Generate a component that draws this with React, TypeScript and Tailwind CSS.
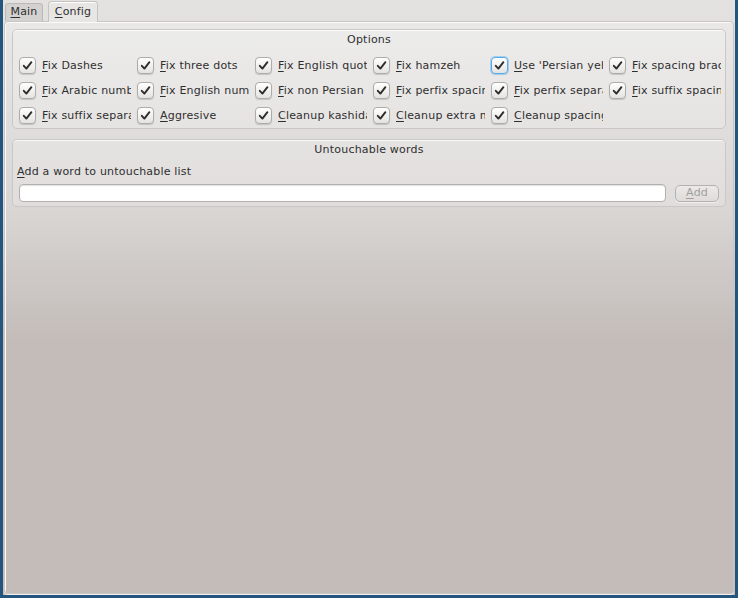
import { ReactNode } from "react"

const options = [
  ["Fix Dashes", "F"],
  ["Fix three dots", "F"],
  ["Fix English quotes", "F"],
  ["Fix hamzeh", "F"],
  ["Use 'Persian yeh' to show ezafe", "U"],
  ["Fix spacing braces and quotes", "F"],
  ["Fix Arabic numbers", "F"],
  ["Fix English numbers", "F"],
  ["Fix non Persian chars", "F"],
  ["Fix perfix spacing", "F"],
  ["Fix perfix separate", "F"],
  ["Fix suffix spacing", "F"],
  ["Fix suffix separate", "F"],
  ["Aggresive", "A"],
  ["Cleanup kashidas", "C"],
  ["Cleanup extra marks", "C"],
  ["Cleanup spacing", "C"],
]

function Mnemonic({ text }: { text: string }) {
  return (
    <>
      <span className="underline underline-offset-2">{text[0]}</span>
      {text.slice(1)}
    </>
  )
}

function CheckBox({ label, focused }: { label: string; focused?: boolean }) {
  return (
    <div className="flex h-[25px] items-center">
      <div
        className={`flex h-[17px] w-[17px] shrink-0 items-center justify-center rounded-[4px] border bg-[linear-gradient(to_bottom,#ffffff,#e4e3e2)] shadow-[0_1px_1px_rgba(0,0,0,0.15)] ${
          focused ? "border-[#5ba8e2] ring-1 ring-[#9fd0f2]" : "border-[#aeaba8]"
        }`}
      >
        <svg width="13" height="13" viewBox="0 0 13 13">
          <path d="M2.8 6.8 L5.4 9.6 L10.4 3.2" fill="none" stroke="#2d2d2d" strokeWidth="1.9" strokeLinecap="round" strokeLinejoin="round" />
        </svg>
      </div>
      <span className="ml-[6px] w-[89px] overflow-hidden whitespace-nowrap text-[11px] leading-[14px] tracking-[0.2px] text-[#2f2f2f]">
        <Mnemonic text={label} />
      </span>
    </div>
  )
}

function GroupBox({ title, children, className = "" }: { title: string; children: ReactNode; className?: string }) {
  return (
    <div
      className={`rounded-[5px] border border-[#cbc7c4] bg-white/20 shadow-[inset_0_1px_0_rgba(255,255,255,0.8)] ${className}`}
    >
      <div className="h-[15px] text-center text-[11px] leading-[15px] tracking-[0.2px] text-[#2f2f2f]">{title}</div>
      {children}
    </div>
  )
}

export default function App() {
  return (
    <div
      className="h-[598px] w-[738px] bg-[#24557e] px-[3px] pb-[3px]"
      style={{ fontFamily: "'DejaVu Sans', 'Noto Sans', sans-serif" }}
    >
      <div className="flex h-full flex-col bg-[linear-gradient(to_bottom,#e4e2e0_0px,#d9d6d4_200px,#c4bdba_330px)]">
        {/* Tabs */}
        <div className="flex h-[21px] items-end gap-[5px] pl-[2px]">
          <div className="flex h-[18px] w-[38px] items-center justify-center rounded-t-[4px] border border-b-0 border-[#bcb8b5] bg-[#d4d2d0] text-[11px] tracking-[0.2px] text-[#2f2f2f]">
            <Mnemonic text="Main" />
          </div>
          <div className="relative -mb-px flex h-[21px] w-[50px] items-center justify-center rounded-t-[4px] border border-b-0 border-[#c6c2bf] bg-[#e7e6e5] text-[11px] tracking-[0.2px] text-[#2f2f2f] shadow-[inset_0_1px_0_#fff]">
            <Mnemonic text="Config" />
          </div>
        </div>

        {/* Tab pane */}
        <div className="mx-px mb-px flex-1 rounded-[4px] border border-[#c9c5c2] bg-[linear-gradient(to_bottom,#e9e8e7_0px,#d8d5d3_190px,#c3bcb9_320px)] px-[7px] pt-[7px] shadow-[inset_1px_1px_0_#fafafa,0_1px_0_#f4f2f1]">
          <GroupBox title="Options" className="pt-[2px]">
            <div className="mt-[6px] grid grid-cols-[repeat(6,118px)] pl-[6px]">
              {options.map(([label], i) => (
                <CheckBox key={label} label={label} focused={i === 4} />
              ))}
            </div>
          </GroupBox>

          <GroupBox title="Untouchable words" className="mt-[10px] pb-[4px] pt-[2px]">
            <div className="mt-[8px] h-[14px] pl-[4px] text-[11px] leading-[14px] tracking-[0.2px] text-[#2f2f2f]">
              <Mnemonic text="Add a word to untouchable list" />
            </div>
            <div className="mt-[5px] flex items-center pl-[6px] pr-[6px]">
              <input
                className="h-[18px] flex-1 rounded-[4px] border border-[#b3afac] bg-white shadow-[inset_0_1px_1px_rgba(0,0,0,0.12)] outline-none"
                readOnly
              />
              <button
                disabled
                className="ml-[9px] flex h-[17px] w-[44px] items-center justify-center rounded-[5px] border border-[#b5b1ae] bg-[linear-gradient(to_bottom,#eceae9,#dedbd9)] text-[11px] tracking-[0.2px] text-[#a19e9b] shadow-[0_1px_0_#f2f0ef]"
              >
                <Mnemonic text="Add" />
              </button>
            </div>
          </GroupBox>
        </div>
      </div>
    </div>
  )
}
